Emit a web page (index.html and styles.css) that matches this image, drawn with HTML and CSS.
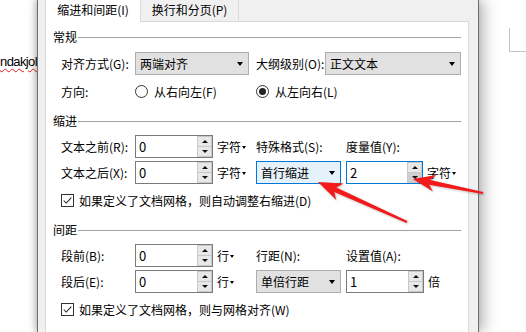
FILE: index.html
```html
<!DOCTYPE html>
<html lang="zh-CN">
<head>
  <meta charset="UTF-8">
  <title>段落</title>
  <link rel="stylesheet" href="styles.css">
</head>
<body>
  <div class="screen">
    <div class="doc doc-left">
      <span class="doc-text">ndakjol</span>
    </div>

    <div class="dialog">
      <div class="tabs">
        <div class="tab active">缩进和间距(I)</div>
        <div class="tab">换行和分页(P)</div>
      </div>

      <div class="panel">
        <!-- 常规 -->
        <div class="group-title"><span>常规</span></div>
        <div class="row row-first">
          <span class="label">对齐方式(G):</span>
          <div class="select w-align"><span>两端对齐</span><i class="caret"></i></div>
          <span class="label outline-label">大纲级别(O):</span>
          <div class="select w-outline"><span>正文文本</span><i class="caret"></i></div>
        </div>
        <div class="row row-radio">
          <span class="label">方向:</span>
          <label class="radio-item"><i class="radio"></i>从右向左(F)</label>
          <label class="radio-item"><i class="radio checked"></i>从左向右(L)</label>
        </div>

        <!-- 缩进 -->
        <div class="group-title gt-indent"><span>缩进</span></div>
        <div class="row row-top">
          <span class="label">文本之前(R):</span>
          <div class="spin"><span class="spin-val">0</span><span class="spin-btns"><b class="up"></b><b class="down"></b></span></div>
          <span class="unit">字符<i class="mini-caret"></i></span>
          <span class="label col2">特殊格式(S):</span>
          <span class="label">度量值(Y):</span>
        </div>
        <div class="row row-next">
          <span class="label">文本之后(X):</span>
          <div class="spin"><span class="spin-val">0</span><span class="spin-btns"><b class="up"></b><b class="down"></b></span></div>
          <span class="unit">字符<i class="mini-caret"></i></span>
          <div class="select focus w-special"><span>首行缩进</span><i class="caret"></i></div>
          <div class="spin focus w-measure"><span class="spin-val">2</span><span class="spin-btns"><b class="up"></b><b class="down hover"></b></span></div>
          <span class="unit">字符<i class="mini-caret"></i></span>
        </div>
        <div class="check-row">
          <i class="checkbox"><svg viewBox="0 0 13 13" width="11" height="11"><polyline points="2,6.5 5,9.5 11,3" fill="none" stroke="#222" stroke-width="1.2"/></svg></i>
          <span>如果定义了文档网格，则自动调整右缩进(D)</span>
        </div>

        <!-- 间距 -->
        <div class="group-title gt-spacing"><span>间距</span></div>
        <div class="row row-top">
          <span class="label">段前(B):</span>
          <div class="spin"><span class="spin-val">0</span><span class="spin-btns"><b class="up"></b><b class="down"></b></span></div>
          <span class="unit">行<i class="mini-caret"></i></span>
          <span class="label col2">行距(N):</span>
          <span class="label">设置值(A):</span>
        </div>
        <div class="row row-next">
          <span class="label">段后(E):</span>
          <div class="spin"><span class="spin-val">0</span><span class="spin-btns"><b class="up"></b><b class="down"></b></span></div>
          <span class="unit">行<i class="mini-caret"></i></span>
          <div class="select w-special"><span>单倍行距</span><i class="caret"></i></div>
          <div class="spin w-setting"><span class="spin-val">1</span><span class="spin-btns"><b class="up"></b><b class="down"></b></span></div>
          <span class="unit">倍</span>
        </div>
        <div class="check-row">
          <i class="checkbox"><svg viewBox="0 0 13 13" width="11" height="11"><polyline points="2,6.5 5,9.5 11,3" fill="none" stroke="#222" stroke-width="1.2"/></svg></i>
          <span>如果定义了文档网格，则与网格对齐(W)</span>
        </div>
      </div>
    </div>

    <div class="doc doc-right">
      <div class="corner"></div>
    </div>

    <!-- annotation arrows -->
    <svg class="arrows" viewBox="0 0 526 332" width="526" height="332">
      <g fill="#f21a1a">
        <polygon points="318,182 343.6,183.6 336.3,187.5 407.4,221.1 406.6,222.9 334.3,192.1 336.2,200"/>
        <polygon points="413,179 436.3,175 430.2,179.9 483.2,192 482.8,194 429.2,184.8 432.9,191.6"/>
      </g>
    </svg>
  </div>
</body>
</html>
```

FILE: styles.css
```css
* {
  box-sizing: border-box;
}

body {
  margin: 0;
  background: #fff;
  font-family: "Noto Sans CJK SC", "Liberation Sans", sans-serif;
  font-size: 12px;
  color: #000;
}

.screen {
  position: relative;
  width: 526px;
  height: 332px;
  overflow: hidden;
  display: flex;
}

.doc {
  background: #fff;
}

.doc-left {
  width: 37px;
  flex: none;
  display: flex;
  justify-content: flex-end;
  align-items: flex-start;
  padding-top: 54px;
  overflow: hidden;
}

.doc-text {
  font-family: "Liberation Sans", sans-serif;
  font-size: 13px;
  line-height: 15px;
  white-space: nowrap;
  letter-spacing: -0.6px;
  text-decoration: underline wavy #e02020;
  text-decoration-thickness: 1px;
  text-underline-offset: 2px;
}

.dialog {
  width: 442px;
  flex: none;
  background: #f0f0f0;
  border-left: 1px solid #6e6e6e;
  border-right: 1px solid #6e6e6e;
  padding: 0 9px 0 7px;
  position: relative;
  z-index: 1;
  box-shadow: -2px 0 6px rgba(0, 0, 0, 0.22), 5px 0 14px rgba(0, 0, 0, 0.28);
}

.tabs {
  display: flex;
  height: 21px;
}

.tab {
  height: 21px;
  line-height: 20px;
  text-align: center;
  border-right: 1px solid #d9d9d9;
  width: 98px;
}

.tab.active {
  width: 96px;
  height: 22px;
  background: #fff;
  border-left: 1px solid #d9d9d9;
  position: relative;
  z-index: 1;
  margin-bottom: -1px;
}

.panel {
  background: #fff;
  border: 1px solid #d9d9d9;
  height: 340px;
  padding: 7px 7px 0 7px;
}

.group-title {
  display: flex;
  align-items: center;
  height: 16px;
  line-height: 16px;
}

.group-title::after {
  content: "";
  flex: 1;
  height: 1px;
  background: #a0a0a0;
  margin-left: 1px;
}

.gt-indent {
  margin-top: 11px;
}

.gt-spacing {
  margin-top: 13px;
}

.row {
  display: flex;
  align-items: center;
  height: 23px;
  padding-left: 8px;
  white-space: nowrap;
}

.row-first {
  margin-top: 7px;
}

.row-radio {
  margin-top: 5px;
  height: 22px;
}

.row-top {
  margin-top: 6px;
}

.row-next {
  margin-top: 3px;
}

.label {
  width: 74px;
  flex: none;
}

.label.col2 {
  width: 90px;
}

.outline-label {
  width: 69px;
  margin-left: 7px;
}

.select {
  display: flex;
  align-items: center;
  justify-content: space-between;
  height: 23px;
  flex: none;
  border: 1px solid #adadad;
  background: #e1e1e1;
  padding: 0 5px 0 4px;
}

.select.focus {
  background: #e5f1fb;
  border-color: #0078d7;
}

.w-align {
  width: 114px;
}

.w-outline {
  width: 136px;
}

.w-special {
  width: 85px;
  margin-right: 5px;
}

.caret {
  width: 0;
  height: 0;
  border-left: 3.5px solid transparent;
  border-right: 3.5px solid transparent;
  border-top: 4px solid #000;
}

.radio-item {
  display: flex;
  align-items: center;
  width: 121px;
  flex: none;
}

.radio {
  width: 13px;
  height: 13px;
  border: 1px solid #333;
  border-radius: 50%;
  margin-right: 6px;
  display: flex;
  align-items: center;
  justify-content: center;
}

.radio.checked::after {
  content: "";
  width: 7px;
  height: 7px;
  border-radius: 50%;
  background: #222;
}

.spin {
  display: flex;
  width: 78px;
  height: 23px;
  flex: none;
  border: 1px solid #7a7a7a;
  background: #fff;
}

.spin.focus {
  border-color: #0078d7;
}

.w-measure {
  width: 77px;
}

.spin-val {
  flex: 1;
  padding-left: 3px;
  line-height: 21px;
  font-size: 13px;
}

.spin-btns {
  width: 15px;
  display: flex;
  flex-direction: column;
  border: 1px solid #c8c8c8;
  background: #e8e8e8;
}

.spin-btns b {
  flex: 1;
  display: flex;
  align-items: center;
  justify-content: center;
}

.spin-btns b + b {
  border-top: 1px solid #c8c8c8;
}

.spin-btns b.hover {
  background: #cfcfcf;
}

.spin-btns .up::after {
  content: "";
  border-left: 3px solid transparent;
  border-right: 3px solid transparent;
  border-bottom: 3px solid #111;
}

.spin-btns .down::after {
  content: "";
  border-left: 3px solid transparent;
  border-right: 3px solid transparent;
  border-top: 3px solid #111;
}

.unit {
  width: 43px;
  flex: none;
  padding-left: 4px;
  display: flex;
  align-items: center;
}

.mini-caret {
  margin: 2px 0 0 1px;
  width: 0;
  height: 0;
  border-left: 2.5px solid transparent;
  border-right: 2.5px solid transparent;
  border-top: 3px solid #000;
}

.check-row {
  display: flex;
  align-items: center;
  height: 17px;
  margin-top: 8px;
  padding-left: 8px;
  white-space: nowrap;
}

.checkbox {
  width: 13px;
  height: 13px;
  border: 1px solid #333;
  margin-right: 5px;
  display: flex;
  align-items: center;
  justify-content: center;
}

.doc-right {
  flex: 1;
  padding: 28px 0 0 30px;
}

.corner {
  height: 24px;
  border-left: 1px solid #c4c4c4;
  border-bottom: 1px solid #c4c4c4;
}

.arrows {
  position: absolute;
  left: 0;
  top: 0;
  z-index: 2;
  pointer-events: none;
  filter: drop-shadow(1px 1px 1px rgba(0, 0, 0, 0.25));
}
```
